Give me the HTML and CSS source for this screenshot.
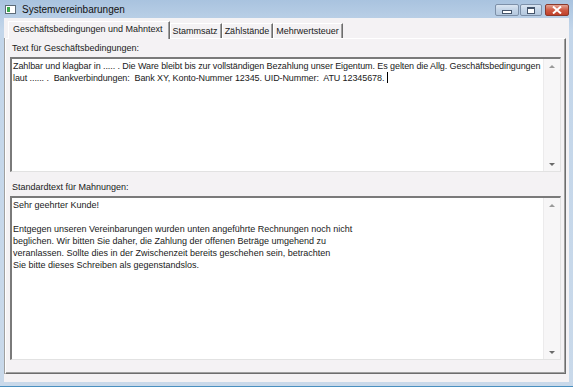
FILE: index.html
```html
<!DOCTYPE html>
<html lang="de">
<head>
  <meta charset="UTF-8" />
  <title>Systemvereinbarungen</title>
  <link rel="stylesheet" href="styles.css">
</head>
<body>
<div class="window">
  <div class="titlebar">
    <div class="app-icon"><span></span></div>
    <div class="title">Systemvereinbarungen</div>
    <div class="controls">
      <div class="ctl min"><span></span></div>
      <div class="ctl max"><span></span></div>
      <div class="ctl close">
        <svg width="12" height="8" viewBox="0 0 12 8"><path d="M2 0.5 L10 7.5 M10 0.5 L2 7.5" stroke="#fff" stroke-width="2"/></svg>
      </div>
    </div>
  </div>

  <div class="client">
    <div class="tabs">
      <div class="tab active">Geschäftsbedingungen und Mahntext</div>
      <div class="tab">Stammsatz</div>
      <div class="tab">Zählstände</div>
      <div class="tab">Mehrwertsteuer</div>
    </div>

    <div class="panel">
      <div class="label">Text für Geschäftsbedingungen:</div>
      <div class="memo memo-agb">
        <div class="memo-text">Zahlbar und klagbar in ..... . Die Ware bleibt bis zur vollständigen Bezahlung unser Eigentum. Es gelten die Allg. Geschäftsbedingungen
laut ...... .  Bankverbindungen:  Bank XY, Konto-Nummer 12345. UID-Nummer:  ATU 12345678. <span class="caret"></span></div>
        <div class="scroll"><span class="up"></span><span class="down"></span></div>
      </div>

      <div class="label label-second">Standardtext für Mahnungen:</div>
      <div class="memo memo-mahn">
        <div class="memo-text">Sehr geehrter Kunde!

Entgegen unseren Vereinbarungen wurden unten angeführte Rechnungen noch nicht
beglichen. Wir bitten Sie daher, die Zahlung der offenen Beträge umgehend zu
veranlassen. Sollte dies in der Zwischenzeit bereits geschehen sein, betrachten
Sie bitte dieses Schreiben als gegenstandslos.</div>
        <div class="scroll"><span class="up"></span><span class="down"></span></div>
      </div>
    </div>
  </div>
</div>
</body>
</html>
```

FILE: styles.css
```css
body {
  margin: 0;
  background: #fff;
  font-family: "Liberation Sans", Arial, sans-serif;
  font-size: 9px;
  color: #1a1a1a;
}

.window {
  width: 573px;
  height: 387px;
  box-sizing: border-box;
  padding: 0 4px 4px 4px;
  display: flex;
  flex-direction: column;
  background: linear-gradient(#a9c3df, #c3d6ea 30px, #c9d9ea);
  border-bottom: 1px solid #4a90c0;
}

.titlebar {
  height: 18px;
  display: flex;
  align-items: center;
  flex-shrink: 0;
}

.app-icon {
  width: 11px;
  height: 9px;
  margin-left: 1px;
  border: 1px solid #5d6b78;
  background: #fff;
  display: flex;
  align-items: center;
  padding-left: 1px;
  box-sizing: border-box;
}

.app-icon span {
  width: 3px;
  height: 5px;
  background: #3bab4a;
}

.title {
  margin-left: 6px;
  font-size: 10px;
  color: #111;
  flex: 1;
}

.controls {
  display: flex;
  align-self: flex-start;
  margin-top: 4px;
  gap: 1px;
}

.ctl {
  height: 12px;
  border: 1px solid #7d90a8;
  border-radius: 2px;
  background: linear-gradient(#dbe6f2, #c2d3e6 50%, #b4c8de);
  display: flex;
  align-items: center;
  justify-content: center;
  box-sizing: border-box;
}

.min { width: 24px; }
.max { width: 22px; }

.min span {
  width: 8px;
  height: 2px;
  margin-top: 4px;
  background: #fff;
  border: 1px solid #44546a;
}

.max span {
  width: 6px;
  height: 4px;
  border: 1px solid #44546a;
  border-top-width: 2px;
  background: #fff;
}

.close {
  width: 24px;
  margin-left: 2px;
  border-color: #8a3a2c;
  background: linear-gradient(#e3a494, #cf5a43 50%, #c0402a);
}

.client {
  flex: 1;
  background: #f4f2f4;
  padding: 3px 3px 8px 1px;
  display: flex;
  flex-direction: column;
  min-height: 0;
}

.tabs {
  display: flex;
  align-items: flex-end;
  height: 17px;
  padding-left: 3px;
  position: relative;
  z-index: 1;
}

.tab {
  height: 15px;
  line-height: 14px;
  padding: 0 3px 0 2px;
  border-left: 1px solid #fff;
  border-top: 1px solid #fff;
  border-right: 1px solid #6d6d6d;
  box-shadow: inset -1px 0 #a0a0a0;
  box-sizing: border-box;
  white-space: nowrap;
}

.tab.active {
  height: 18px;
  margin-bottom: -1px;
  padding: 0 6px 0 4px;
  background: #f4f2f4;
  line-height: 15px;
}

.panel {
  flex: 1;
  display: flex;
  flex-direction: column;
  border-left: 1px solid #fff;
  border-top: 1px solid #fff;
  border-right: 1px solid #6d6d6d;
  border-bottom: 1px solid #6d6d6d;
  box-shadow: inset -1px -1px #a0a0a0, -1px 0 #a0a0a0;
  padding: 3px 4px 13px 4px;
  min-height: 0;
}

.label {
  height: 12px;
  line-height: 12px;
  padding-left: 2px;
  margin-bottom: 3px;
}

.label-second {
  margin-top: 9px;
}

.memo {
  display: flex;
  background: #fff;
  border-top: 2px solid #7a7a7a;
  border-left: 2px solid #7a7a7a;
  border-right: 1px solid #e2e2e2;
  border-bottom: 1px solid #e2e2e2;
}

.memo-agb {
  height: 115px;
  box-sizing: border-box;
}

.memo-agb .memo-text {
  letter-spacing: -0.09px;
}

.memo-mahn {
  flex: 1;
}

.memo-text {
  flex: 1;
  padding: 1px 1px;
  line-height: 12px;
  white-space: pre;
  overflow: hidden;
}

.caret {
  display: inline-block;
  width: 1px;
  height: 11px;
  background: #000;
  vertical-align: -2px;
}

.scroll {
  width: 16px;
  background: #f7f6f7;
  border-left: 1px solid #ecebec;
  display: flex;
  flex-direction: column;
  justify-content: space-between;
  align-items: center;
  padding: 6px 0 5px;
}

.up, .down {
  width: 0;
  height: 0;
  border-left: 3px solid transparent;
  border-right: 3px solid transparent;
}

.up { border-bottom: 3px solid #9a9a9a; }
.down { border-top: 3px solid #6a6a6a; }
```
